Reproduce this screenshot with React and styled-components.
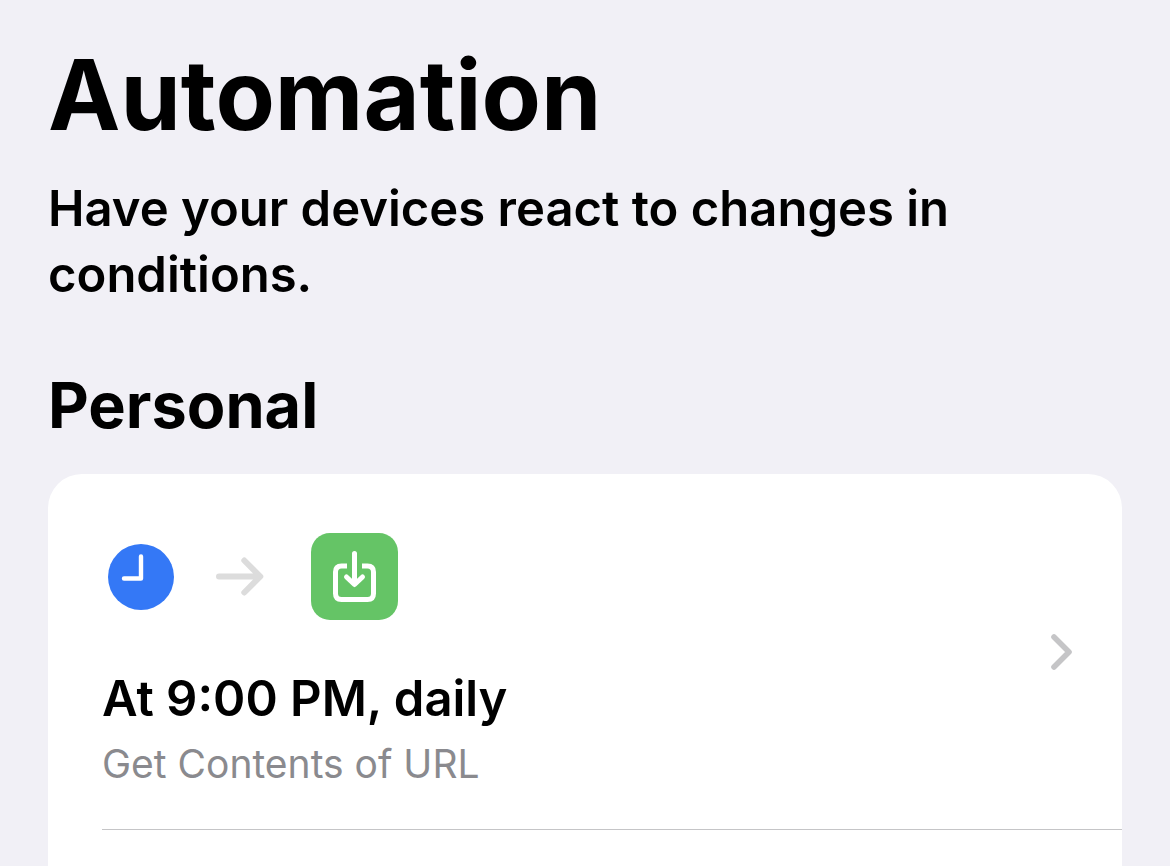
import React from "react";
import styled, { createGlobalStyle } from "styled-components";

const GlobalStyle = createGlobalStyle`
  *, *::before, *::after { box-sizing: border-box; }
  body {
    margin: 0;
    background: #f1f0f6;
    color: #000;
    font-family: Inter, "Liberation Sans", sans-serif;
  }
`;

const Page = styled.main`
  display: flex;
  flex-direction: column;
  min-height: 100vh;
  padding: 35px 48px 0;
`;

const Title = styled.h1`
  margin: 0;
  font-size: 97px;
  line-height: 120px;
  font-weight: 700;
`;

const Lead = styled.p`
  margin: 21px 0 0;
  font-size: 49px;
  line-height: 66px;
  font-weight: 600;
`;

const SectionTitle = styled.h2`
  margin: 57px 0 29px;
  font-size: 63px;
  line-height: 80px;
  font-weight: 700;
`;

const List = styled.ul`
  flex: 1;
  margin: 0;
  padding: 0;
  list-style: none;
  background: #fff;
  border-radius: 34px 34px 0 0;
`;

const Item = styled.li`
  padding-left: 54px;
`;

const Row = styled.a`
  display: grid;
  grid-template-columns: 1fr auto;
  align-items: center;
  padding-right: 49px;
  border-bottom: 1px solid #c5c5c7;
  color: inherit;
  text-decoration: none;
`;

const Summary = styled.div`
  padding: 59px 0 42px;
`;

const Flow = styled.div`
  display: flex;
  align-items: center;
  gap: 42px;
  padding-left: 6px;
  margin-bottom: 46px;
`;

const ActionTile = styled.span`
  display: flex;
  width: 87px;
  height: 87px;
  border-radius: 19px;
  background: #65c466;
`;

const Name = styled.div`
  font-size: 49px;
  line-height: 66px;
  font-weight: 600;
`;

const Detail = styled.div`
  margin-top: 9px;
  font-size: 39px;
  line-height: 46px;
  color: #8a8a8e;
`;

const ClockIcon = () => (
  <svg width="66" height="66" viewBox="0 0 66 66" aria-hidden="true">
    <circle cx="33" cy="33" r="33" fill="#3478f6" />
    <path d="M33 12.5V34.5H16" fill="none" stroke="#fff" strokeWidth="4.4" strokeLinecap="round" strokeLinejoin="round" />
  </svg>
);

const ArrowIcon = () => (
  <svg width="53" height="40" viewBox="0 0 53 40" aria-hidden="true">
    <path d="M3 19.5H44M28.3 3.5L44.3 19.5L28.3 35.5" fill="none" stroke="#dcdcdc" strokeWidth="6" strokeLinecap="round" strokeLinejoin="round" />
  </svg>
);

const DownloadIcon = () => (
  <svg width="87" height="87" viewBox="0 0 87 87" fill="none" stroke="#fff" aria-hidden="true">
    <path d="M36 33H30.5Q24.5 33 24.5 39V60.5Q24.5 66.5 30.5 66.5H56.5Q62.5 66.5 62.5 60.5V39Q62.5 33 56.5 33H51" strokeWidth="5" />
    <path d="M43.5 20.5V50M35.5 44L43.5 51.5L51.5 44" strokeWidth="5" strokeLinecap="round" strokeLinejoin="round" />
  </svg>
);

const ChevronIcon = () => (
  <svg width="24" height="40" viewBox="0 0 24 40" aria-hidden="true">
    <path d="M5 5L20 20L5 35" fill="none" stroke="#c5c5c7" strokeWidth="5.6" strokeLinecap="round" strokeLinejoin="round" />
  </svg>
);

export default function App() {
  return (
    <>
      <GlobalStyle />
      <Page>
        <Title>Automation</Title>
        <Lead>Have your devices react to changes in conditions.</Lead>
        <SectionTitle>Personal</SectionTitle>
        <List>
          <Item>
            <Row href="#daily">
              <Summary>
                <Flow>
                  <ClockIcon />
                  <ArrowIcon />
                  <ActionTile>
                    <DownloadIcon />
                  </ActionTile>
                </Flow>
                <Name>At 9:00 PM, daily</Name>
                <Detail>Get Contents of URL</Detail>
              </Summary>
              <ChevronIcon />
            </Row>
          </Item>
        </List>
      </Page>
    </>
  );
}
